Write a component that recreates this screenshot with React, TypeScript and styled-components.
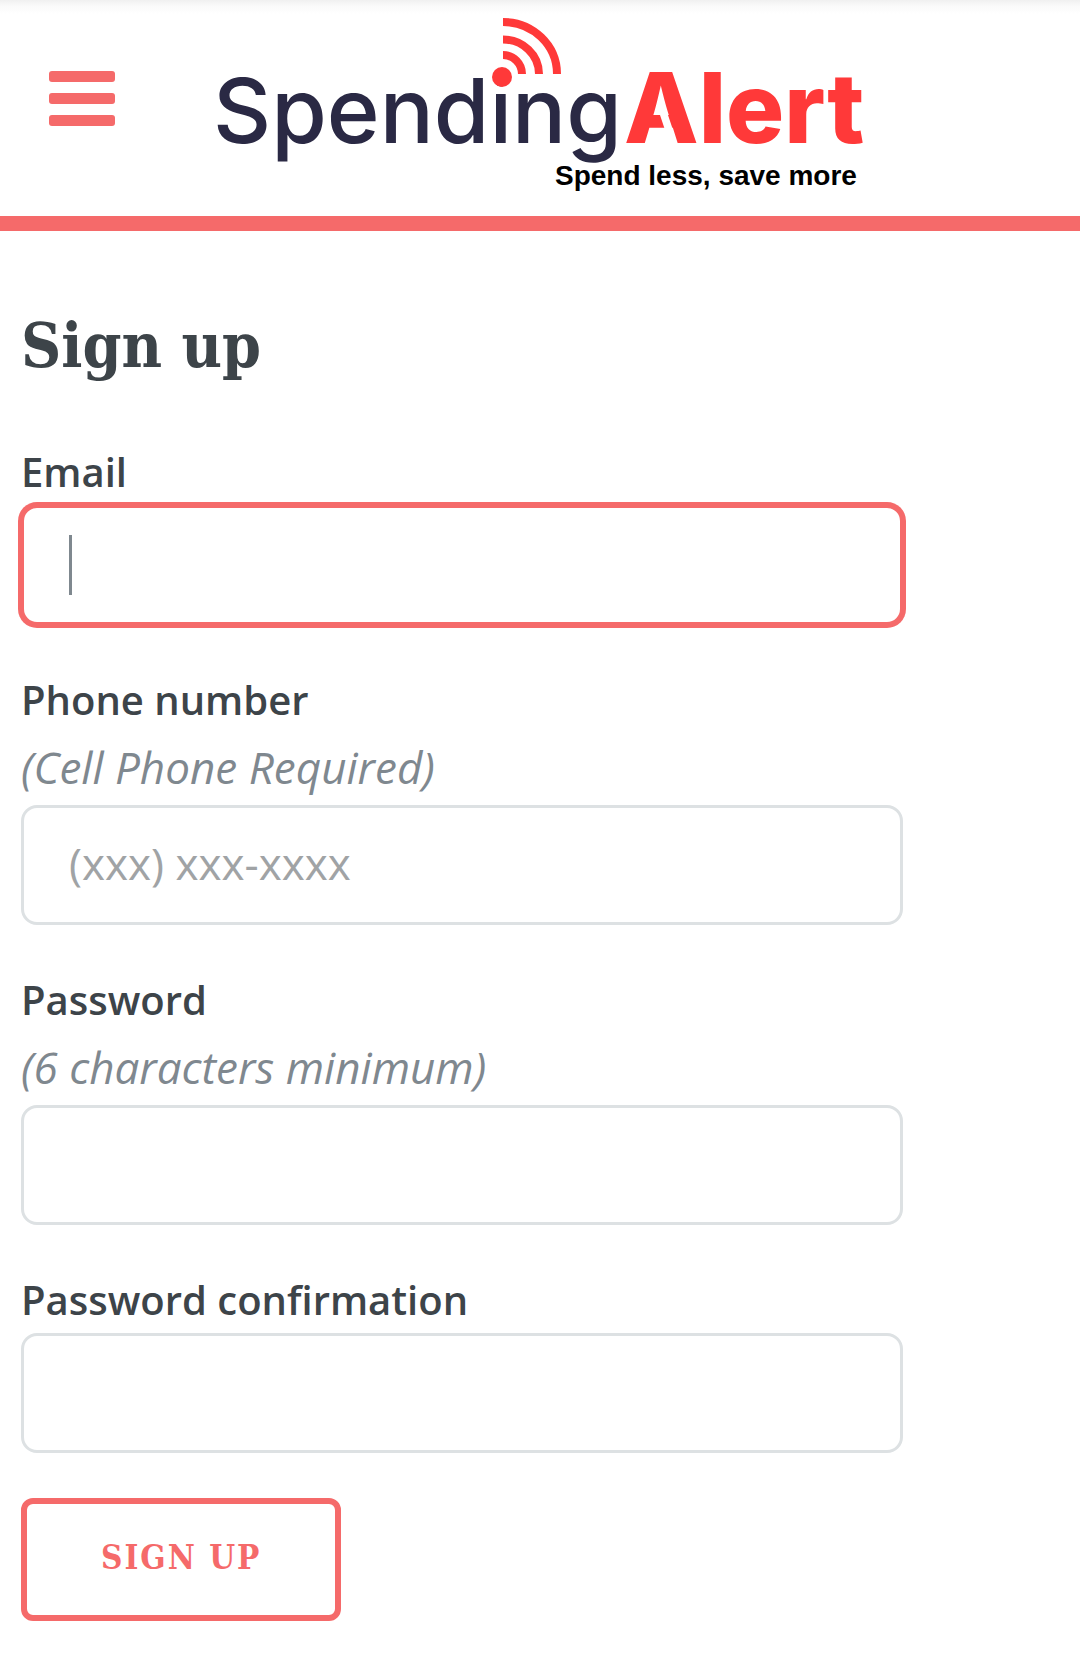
import React from "react";
import styled, { createGlobalStyle, css } from "styled-components";

const color = {
  accent: "#f56a6a",
  heading: "#3d4449",
  text: "#7f888f",
  border: "#dde1e3",
  navy: "#2a2944",
  red: "#ff3939",
};

const sans = `"Open Sans", "Noto Sans", sans-serif`;
const slab = `"Roboto Slab", "DejaVu Serif Condensed", "DejaVu Serif", serif`;

const GlobalStyle = createGlobalStyle`
  *, *::before, *::after { box-sizing: border-box; }
  body {
    margin: 0;
    background: #fff;
    color: ${color.text};
    font-family: ${sans};
  }
`;

const Header = styled.header`
  display: grid;
  grid-template-columns: 1fr minmax(0, 648px) 1fr;
  align-items: center;
  padding: 8px 0 26px;
  border-bottom: 15px solid ${color.accent};
  background: linear-gradient(#f0f0f0, #fafafa 6px, #fff 14px);
`;

const MenuButton = styled.button`
  display: grid;
  gap: 11px;
  justify-self: start;
  margin-left: 49px;
  padding: 0 0 1px;
  border: 0;
  background: none;
  cursor: pointer;
`;

const MenuBar = styled.span`
  width: 66px;
  height: 11px;
  border-radius: 3px;
  background: ${color.accent};
`;

const LogoLink = styled.a`
  display: block;

  svg {
    display: block;
    width: 100%;
    overflow: visible;
  }
`;

const Main = styled.main`
  padding: 74px 21px 50px;
`;

const Title = styled.h1`
  margin: 0 0 62px;
  color: ${color.heading};
  font: 700 62px/82px ${slab};
`;

const Fields = styled.div`
  display: grid;
  gap: 52px;
`;

const Label = styled.label`
  display: block;
  margin-bottom: 10px;
  color: ${color.heading};
  font-size: 40px;
  font-weight: 600;
  line-height: 46px;
`;

const Hint = styled.em`
  display: block;
  margin-bottom: 4px;
  font-size: 44px;
  line-height: 68px;
`;

const InputWrap = styled.div`
  position: relative;
  width: 85%;
`;

const Input = styled.input<{ $active?: boolean }>`
  display: block;
  width: 100%;
  height: 120px;
  padding: 0 45px 4px;
  border: 3px solid ${color.border};
  border-radius: 16px;
  outline: 0;
  background: #fff;
  color: ${color.heading};
  font: 400 44px ${sans};

  &::placeholder {
    color: #a0a3a5;
    opacity: 1;
  }

  ${(p) =>
    p.$active &&
    css`
      border-color: ${color.accent};
      box-shadow: 0 0 0 3px ${color.accent};
      caret-color: transparent;
    `}
`;

const Caret = styled.span`
  position: absolute;
  top: 30px;
  left: 48px;
  width: 3px;
  height: 60px;
  background: ${color.text};
`;

const Actions = styled.div`
  margin-top: 45px;
`;

const SubmitButton = styled.button`
  height: 123px;
  padding: 0 74px 4px;
  border: 6px solid ${color.accent};
  border-radius: 12px;
  background: #fff;
  color: ${color.accent};
  font: 700 33px ${slab};
  letter-spacing: 2px;
  text-transform: uppercase;
  cursor: pointer;
`;

function Logo() {
  return (
    <svg viewBox="216 8 648 182" role="img" aria-label="SpendingAlert">
      <text x="213" y="143" fontFamily="Inter, sans-serif" fontWeight="500" fontSize="90" fill={color.navy}>
        Spending
      </text>
      <text x="624" y="143" fontFamily="Inter, sans-serif" fontWeight="800" fontSize="97" fill={color.red}>
        Alert
      </text>
      <path d="M660 115H668L673 130H665Z" fill="#fff" />
      <g fill="none" stroke={color.red} strokeWidth="8">
        <path d="M503 22A54 52 0 0 1 557 74" />
        <path d="M503 39.5A36 34.5 0 0 1 539 74" />
        <path d="M503 55A19 19 0 0 1 522 74" />
      </g>
      <circle cx="502" cy="77" r="10" fill={color.red} />
      <text x="555" y="185" fontFamily="Liberation Sans, Arial, sans-serif" fontWeight="700" fontSize="28" fill="#000">
        Spend less, save more
      </text>
    </svg>
  );
}

type FieldProps = {
  id: string;
  label: string;
  type: string;
  hint?: string;
  placeholder?: string;
  active?: boolean;
};

function Field({ id, label, type, hint, placeholder, active }: FieldProps) {
  return (
    <div>
      <Label htmlFor={id}>{label}</Label>
      {hint && <Hint id={`${id}-hint`}>{hint}</Hint>}
      <InputWrap>
        <Input
          id={id}
          type={type}
          placeholder={placeholder}
          aria-describedby={hint ? `${id}-hint` : undefined}
          $active={active}
        />
        {active && <Caret aria-hidden="true" />}
      </InputWrap>
    </div>
  );
}

export default function App() {
  return (
    <>
      <GlobalStyle />
      <Header>
        <MenuButton type="button" aria-label="Menu">
          <MenuBar />
          <MenuBar />
          <MenuBar />
        </MenuButton>
        <LogoLink href="#">
          <Logo />
        </LogoLink>
      </Header>
      <Main>
        <Title>Sign up</Title>
        <form onSubmit={(e) => e.preventDefault()}>
          <Fields>
            <Field id="email" label="Email" type="email" active />
            <Field id="phone" label="Phone number" type="tel" hint="(Cell Phone Required)" placeholder="(xxx) xxx-xxxx" />
            <Field id="password" label="Password" type="password" hint="(6 characters minimum)" />
            <Field id="confirmation" label="Password confirmation" type="password" />
          </Fields>
          <Actions>
            <SubmitButton type="submit">Sign up</SubmitButton>
          </Actions>
        </form>
      </Main>
    </>
  );
}
